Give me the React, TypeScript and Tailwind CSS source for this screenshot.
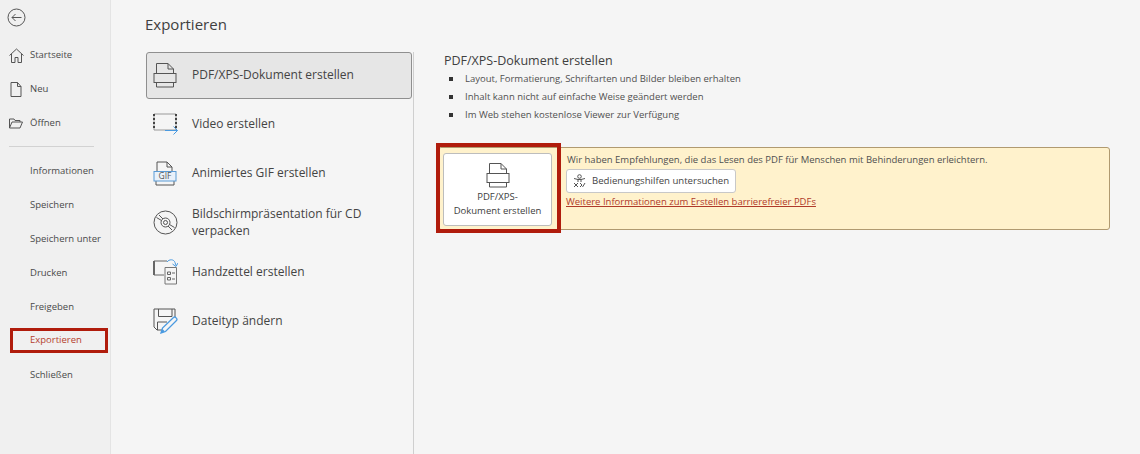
function Back() {
  return (
    <svg width="19" height="19" viewBox="0 0 19 19" fill="none" stroke="#555" strokeWidth="1">
      <circle cx="9.5" cy="9.5" r="8.5" />
      <path d="M14.5 9.5H5M8.5 6L5 9.5L8.5 13" />
    </svg>
  );
}
function HomeI() {
  return (
    <svg width="15" height="15" viewBox="0 0 15 15" fill="none" stroke="#555" strokeWidth="1">
      <path d="M0.5 7.5L7.5 1L14.5 7.5M2.5 6V14.5H6V9.5H9V14.5H12.5V6" />
    </svg>
  );
}
function NewI() {
  return (
    <svg width="12" height="15" viewBox="0 0 12 15" fill="none" stroke="#555" strokeWidth="1">
      <path d="M1 .5H7.5L11 4.5V14.5H1ZM7.5 .5V4.5H11" />
    </svg>
  );
}
function OpenI() {
  return (
    <svg width="14" height="11" viewBox="0 0 14 11" fill="none" stroke="#555" strokeWidth="1">
      <path d="M.5 10V1H5L6 2.5H11V4M.5 10L3 4H13.5L11 10Z" />
    </svg>
  );
}
function Printer() {
  return (
    <svg width="24" height="25" viewBox="0 0 24 25" fill="none" stroke="#555" strokeWidth="1">
      <path d="M3.5 10V.5H15L20.5 6V10M15 .5V6H20.5" />
      <rect x="1" y="10.5" width="22" height="9" />
      <path d="M3.5 19.5V24H20.5V19.5" />
    </svg>
  );
}
function VideoI() {
  return (
    <svg width="26" height="24" viewBox="0 0 26 24" fill="none">
      <path d="M1 1H23V17H1Z" stroke="#999" strokeWidth="1" />
      <path d="M1 1V17M23 1V17" stroke="#444" strokeWidth="2" strokeDasharray="2 2" />
      <path d="M12 17.5H24.5M20.5 13.5L24.5 17.5L20.5 21.5" stroke="#4a9ae0" strokeWidth="1" />
    </svg>
  );
}
function GifI() {
  return (
    <svg width="24" height="25" viewBox="0 0 24 25" fill="none">
      <path d="M4 10V1H14L19 6V10M14 1V6H19M3 20V24H21V20" stroke="#555" strokeWidth="1" />
      <rect x="1" y="10.5" width="22" height="9.5" fill="#e9f1fa" stroke="#5b9bd5" />
      <text x="12" y="18.4" textAnchor="middle" fontSize="8.5" fill="#555" fontFamily="Open Sans, sans-serif" stroke="none">GIF</text>
    </svg>
  );
}
function CdI() {
  return (
    <svg width="25" height="25" viewBox="0 0 25 25" fill="none" stroke="#555" strokeWidth="1">
      <circle cx="12.5" cy="12.5" r="11.5" />
      <circle cx="12.5" cy="12.5" r="4.5" />
      <circle cx="12.5" cy="12.5" r="2" />
      <path d="M3.5 7.5L8.5 10.5M6 5L10 9M21.5 17.5L16.5 14.5M19 20L15 16" />
    </svg>
  );
}
function HandoutI() {
  return (
    <svg width="25" height="26" viewBox="0 0 25 26" fill="none">
      <path d="M11 16H1V2H14" stroke="#666" strokeWidth="1" />
      <path d="M1 2V16" stroke="#666" strokeWidth="2" />
      <path d="M12 8.5H23.5V25H12Z" stroke="#777" strokeWidth="1" fill="#f5f5f5" />
      <path d="M14.5 13H17.5V15.5H14.5ZM14.5 18.5H17.5V21H14.5ZM19 14H22M19 20H22" stroke="#666" strokeWidth="1" />
      <path d="M14 3C16 0 21 0 22 3.5L23 6.5M19.5 5L23 7.5L25 4" stroke="#4a9ae0" strokeWidth="1" />
    </svg>
  );
}
function SaveI() {
  return (
    <svg width="25" height="26" viewBox="0 0 25 26" fill="none">
      <path d="M1 1H22V10M14 22H4L1 19V1" stroke="#555" strokeWidth="1" />
      <path d="M5.5 1V8.5H19V1M4.5 22V14H14" stroke="#555" strokeWidth="1" />
      <path d="M8 25L9.5 20L20.5 9.5C22 8 25 11 23.5 12.5L12.5 23.5Z" stroke="#4a9ae0" strokeWidth="1.3" fill="#f5f5f5" />
      <path d="M8 25L9.5 21L12 23.5Z" fill="#4a9ae0" />
    </svg>
  );
}
function AccI() {
  return (
    <svg width="13" height="14" viewBox="0 0 13 14" fill="none" stroke="#555" strokeWidth="1" className="shrink-0">
      <circle cx="6.5" cy="2.5" r="1.8" />
      <path d="M1 4.5L5 5.5H8L12 4.5M5 5.5V8M8 5.5V8" />
      <path d="M1 9L5 13M5 9L1 13M7 9L9 11L7 13M12 9L9.5 13" />
    </svg>
  );
}
function NavItem({ label, icon, active }: { label: string; icon?: React.ReactNode; active?: boolean }) {
  return (
    <div className={active ? "h-[25px] mt-[3.5px] mb-[5.5px] ml-[10px] mr-[2px] border-[3px] border-[#b01c0c] flex items-center pl-[17px] text-[#b5402f]" : "h-[34px] flex items-center pl-[30px] relative"}>
      {icon && <span className="absolute left-0 w-[32px] flex justify-center">{icon}</span>}
      <span>{label}</span>
    </div>
  );
}
function ExportItem({ icon, label, selected, raise }: { icon: React.ReactNode; label: React.ReactNode; selected?: boolean; raise?: boolean }) {
  return (
    <div className={"h-[47px] mb-[2px] flex items-center rounded-[3px] border " + (selected ? "bg-[#e6e6e6] border-[#8f8f8f]" : "border-transparent")}>
      <span className="w-[45px] pl-[6px] flex justify-start shrink-0">{icon}</span>
      <span className={"text-[12px] leading-[17px] text-[#444] " + (raise ? "pb-[2px]" : "")}>{label}</span>
    </div>
  );
}
export default function App() {
  return (
    <div className="w-[1140px] h-[454px] overflow-hidden flex bg-[#f5f5f5] text-[#444]" style={{ fontFamily: '"Open Sans", "Noto Sans", sans-serif' }}>
      <aside className="w-[111px] shrink-0 bg-[#f0f0f0] border-r border-[#e4e4e4] text-[9.5px] text-[#4a4a4a]">
        <div className="h-[38px] pt-[8px] pl-[7px]"><Back /></div>
        <NavItem label="Startseite" icon={<HomeI />} />
        <NavItem label="Neu" icon={<NewI />} />
        <NavItem label="Öffnen" icon={<OpenI />} />
        <div className="h-px bg-[#d2d2d2] ml-[9px] mr-[16px] mt-[6px] mb-[7px]" />
        <NavItem label="Informationen" />
        <NavItem label="Speichern" />
        <NavItem label="Speichern unter" />
        <NavItem label="Drucken" />
        <NavItem label="Freigeben" />
        <NavItem label="Exportieren" active />
        <NavItem label="Schließen" />
      </aside>
      <main className="flex-1 flex flex-col pl-[34px]">
        <h1 className="text-[15px] leading-[20px] font-medium mt-[14px] mb-[18px] text-[#404040]">Exportieren</h1>
        <div className="flex flex-1">
          <div className="w-[269px] shrink-0 border-r border-[#cfcfcf] pr-[1px] pl-[1px]">
            <ExportItem selected raise icon={<Printer />} label="PDF/XPS-Dokument erstellen" />
            <ExportItem raise icon={<VideoI />} label="Video erstellen" />
            <ExportItem raise icon={<GifI />} label="Animiertes GIF erstellen" />
            <ExportItem raise icon={<CdI />} label={<>Bildschirmpräsentation für CD<br />verpacken</>} />
            <ExportItem icon={<HandoutI />} label="Handzettel erstellen" />
            <ExportItem icon={<SaveI />} label="Dateityp ändern" />
          </div>
          <div className="pl-[30px] flex-1 pr-[30px]">
            <h2 className="text-[12.5px] leading-[17px] text-[#404040]">PDF/XPS-Dokument erstellen</h2>
            <ul className="mt-[1px] text-[9.5px] text-[#505050] leading-[18px]">
              {["Layout, Formatierung, Schriftarten und Bilder bleiben erhalten", "Inhalt kann nicht auf einfache Weise geändert werden", "Im Web stehen kostenlose Viewer zur Verfügung"].map((t) => (
                <li key={t} className="flex items-center">
                  <span className="w-[4px] h-[4px] bg-[#333] ml-[5px] mr-[12px]" />
                  {t}
                </li>
              ))}
            </ul>
            <div className="mt-[23px] h-[83px] w-[672px] -ml-[6px] bg-[#fff2cc] border border-[#b09a70] rounded-[3px] flex relative">
              <div className="absolute -left-[3px] -top-[5px] w-[125px] h-[90px] border-[4px] border-[#b01c0c]" />
              <div className="ml-[4px] mt-[5px] w-[109px] h-[73px] bg-white border border-[#bdbdbd] rounded-[3px] flex flex-col items-center shrink-0">
                <div className="mt-[9px] h-[25px]"><Printer /></div>
                <div className="text-[9.5px] leading-[14px] text-center mt-[2px] text-[#404040]">PDF/XPS-<br />Dokument erstellen</div>
              </div>
              <div className="pl-[14px] pt-[5px] text-[9.5px] text-[#505050] whitespace-nowrap">
                <div className="leading-[14px] pl-[1px]">Wir haben Empfehlungen, die das Lesen des PDF für Menschen mit Behinderungen erleichtern.</div>
                <div className="mt-[2px] w-[170px] h-[24px] bg-white border border-[#c8c8c8] rounded-[3px] flex items-center pl-[6px] gap-[6px] text-[#444] text-[9.6px]">
                  <AccI />
                  <span>Bedienungshilfen untersuchen</span>
                </div>
                <div className="mt-[2px] leading-[14px] text-[#b03a2a] underline">Weitere Informationen zum Erstellen barrierefreier PDFs</div>
              </div>
            </div>
          </div>
        </div>
      </main>
    </div>
  );
}
